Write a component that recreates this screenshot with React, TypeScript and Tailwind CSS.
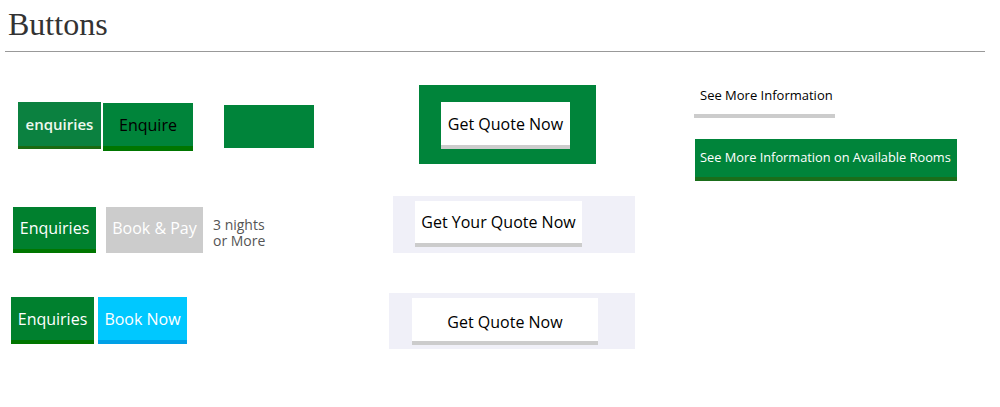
import React from "react";

const sans = { fontFamily: '"Open Sans", "Noto Sans", sans-serif' };

const App: React.FC = () => {
  return (
    <div className="w-[1000px] h-[407px] bg-white overflow-hidden" style={sans}>
      <div className="pl-[8px] pt-[6px]">
        <h1
          className="text-[32px] leading-[36px] text-[#333]"
          style={{ fontFamily: '"Liberation Serif", "Times New Roman", serif' }}
        >
          Buttons
        </h1>
      </div>
      <div className="ml-[5px] mt-[9px] w-[980px] h-px bg-[#999]" />

      <div className="flex">
        {/* left column */}
        <div className="w-[380px] flex flex-col">
          <div className="flex items-start mt-[50px] ml-[18px]">
            <button className="w-[83px] h-[47px] bg-[#0b8140] border-b-[3px] border-[#1b6a12] text-[#eef8ee] text-[15px] font-semibold">
              enquiries
            </button>
            <button className="ml-[2px] mt-px w-[90px] h-[48px] bg-[#00843a] border-b-[5px] border-[#007600] text-black text-[16px]">
              Enquire
            </button>
            <div className="ml-[31px] mt-[3px] w-[90px] h-[43px] bg-[#00843a]" />
          </div>

          <div className="flex items-start mt-[56px] ml-[13px]">
            <button className="w-[83px] h-[46px] bg-[#00802e] border-b-[4px] border-[#007600] text-white text-[16px]">
              Enquiries
            </button>
            <button className="ml-[10px] w-[97px] h-[46px] bg-[#cccccc] border-b-[4px] border-[#cccccc] text-white text-[16px] whitespace-nowrap">
              Book &amp; Pay
            </button>
            <div className="ml-[10px] mt-[10px] text-[14px] leading-[16px] text-[#555]">
              3 nights
              <br />
              or More
            </div>
          </div>

          <div className="flex mt-[44px] ml-[11px]">
            <button className="w-[83px] h-[47px] bg-[#00802e] border-b-[4px] border-[#007600] text-white text-[16px]">
              Enquiries
            </button>
            <button className="ml-[4px] w-[89px] h-[47px] bg-[#00c8ff] border-b-[4px] border-[#00a0e6] text-white text-[16px]">
              Book Now
            </button>
          </div>
        </div>

        {/* middle column */}
        <div className="w-[300px] flex flex-col">
          <div className="mt-[33px] ml-[39px] w-[177px] h-[79px] bg-[#00843a] pt-[17px] pl-[22px]">
            <button className="w-[129px] h-[47px] bg-white border-b-[4px] border-[#cccccc] text-black text-[16px]">
              Get Quote Now
            </button>
          </div>

          <div className="mt-[32px] ml-[13px] w-[242px] h-[57px] bg-[#f0f0f8] pt-[5px] pl-[22px]">
            <button className="w-[167px] h-[46px] bg-white border-b-[4px] border-[#cccccc] text-black text-[16px]">
              Get Your Quote Now
            </button>
          </div>

          <div className="mt-[40px] ml-[9px] w-[246px] h-[56px] bg-[#f0f0f8] pt-[5px] pl-[23px]">
            <button className="w-[186px] h-[47px] bg-white border-b-[4px] border-[#cccccc] pt-[4px] text-black text-[16px]">
              Get Quote Now
            </button>
          </div>
        </div>

        {/* right column */}
        <div className="flex flex-col ml-[14px]">
          <div className="mt-[34px] w-[141px] h-[32px] border-b-[4px] border-[#cccccc] pl-[6px] text-[13px] leading-[18px] text-black whitespace-nowrap">
            See More Information
          </div>
          <button className="mt-[21px] ml-px w-[262px] h-[42px] bg-[#00843a] border-b-[4px] border-[#1a6e1a] text-white text-[12.8px] font-medium whitespace-nowrap text-left pl-[5px]">
            See More Information on Available Rooms
          </button>
        </div>
      </div>
    </div>
  );
};

export default App;
